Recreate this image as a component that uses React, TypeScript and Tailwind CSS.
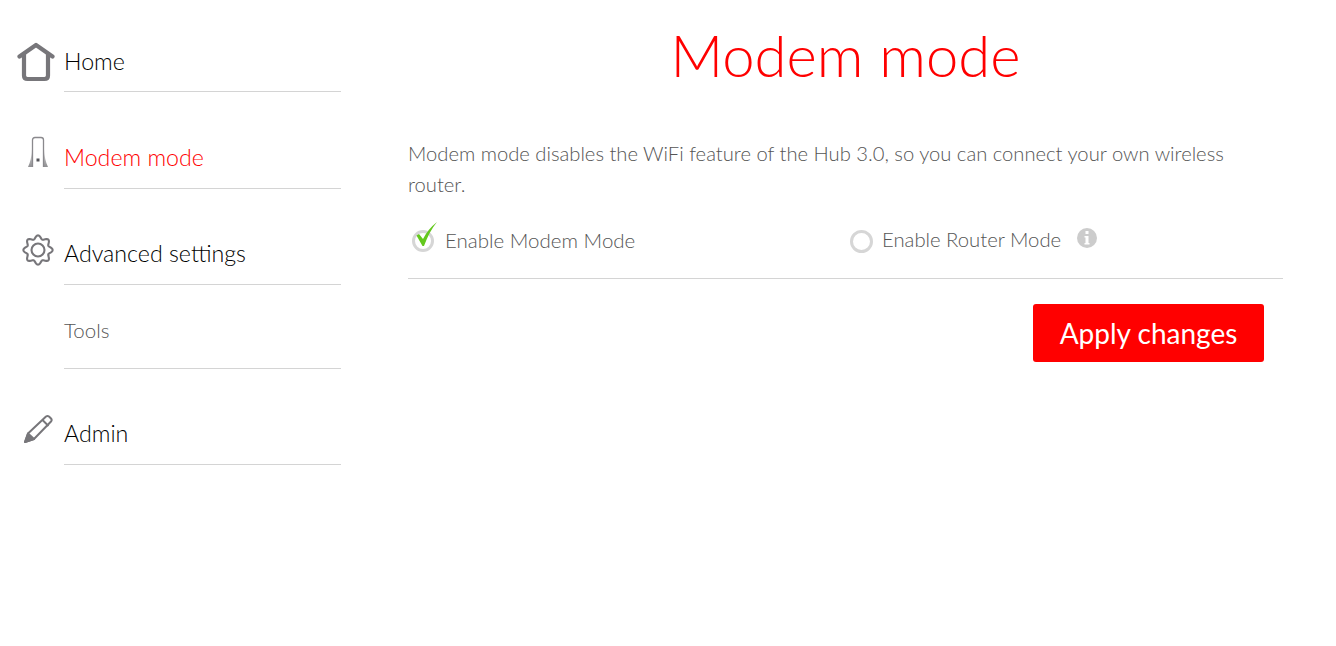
const gearPath = (() => {
  const pts: string[] = [];
  for (let i = 0; i < 240; i++) {
    const t = (i / 240) * Math.PI * 2;
    const r = 12.9 + 1.7 * Math.cos(8 * t);
    pts.push(`${(16 + r * Math.sin(t)).toFixed(2)} ${(16 - r * Math.cos(t)).toFixed(2)}`);
  }
  return `M${pts.join(" L")} Z`;
})();

export default function App() {
  const line = "border-b border-[#d4d4d4]";
  return (
    <div className="flex h-[646px] w-[1336px] overflow-hidden bg-white font-['Lato',sans-serif] font-light">
      <nav className="ml-[17px] mt-[42px] w-[324px] shrink-0">
        <div className="flex">
          <div className="w-[47px] shrink-0">
            <svg width="38" height="40" viewBox="0 0 38 40" fill="none" stroke="#77767a" strokeWidth="4.2" strokeLinejoin="round" strokeLinecap="round">
              <path d="M2.5 14.5 L19 3 L35.5 14.5" />
              <path d="M7 12 V33.5 Q7 37 10.5 37 H27.5 Q31 37 31 33.5 V12" />
            </svg>
          </div>
          <div className={`${line} h-[50px] flex-1 pt-[6px] text-[23.2px] leading-[26px] text-black`}>Home</div>
        </div>
        <div className="mt-[42px] flex">
          <div className="w-[47px] shrink-0 pl-[10px] pt-[2px]">
            <svg width="22" height="32" viewBox="0 0 22 32" fill="none">
              <defs>
                <linearGradient id="flare" x1="0" y1="0" x2="0" y2="1">
                  <stop offset="0" stopColor="#e0e0e0" />
                  <stop offset="1" stopColor="#8f8f92" />
                </linearGradient>
              </defs>
              <path d="M5 13 Q4.5 24 1 31 H5 Z M17 13 Q17.5 24 21 31 H17 Z" fill="url(#flare)" />
              <path d="M5.5 31 V4 Q5.5 1.5 8 1.5 H14 Q16.5 1.5 16.5 4 V31" stroke="#8a898d" strokeWidth="1.3" />
              <rect x="9.5" y="22.5" width="3" height="3" fill="#55555a" />
            </svg>
          </div>
          <div className={`${line} h-[55px] flex-1 pt-[10px] text-[23.2px] leading-[26px] text-[#ff0000]`}>Modem mode</div>
        </div>
        <div className="mt-[45px] flex">
          <div className="w-[47px] shrink-0 pl-[5px]">
            <svg width="32" height="32" viewBox="0 0 32 32" fill="none" stroke="#77767a" strokeWidth="2.1" strokeLinejoin="round">
              <path d={gearPath} />
              <circle cx="16" cy="16" r="6.5" />
            </svg>
          </div>
          <div className={`${line} h-[51px] flex-1 pt-[6px] text-[23.2px] leading-[26px] text-black`}>Advanced settings</div>
        </div>
        <div className={`${line} ml-[47px] h-[84px] pt-[32px] text-[20.5px] leading-[26px] text-[#555]`}>Tools</div>
        <div className="mt-[45px] flex">
          <div className="w-[47px] shrink-0 pl-[6px]">
            <svg width="30" height="30" viewBox="0 0 30 30" fill="none" stroke="#77767a" strokeWidth="2" strokeLinejoin="round">
              <path d="M23 2.5 Q24.5 1.5 26 2.5 L28 4.5 Q29.3 6 28 7.5 L11 25 L2 28 L5 19.5 Z" />
              <path d="M19.5 6 L25.5 12" />
              <path d="M5 19.5 L11 25 L2 28 Z" fill="#77767a" />
            </svg>
          </div>
          <div className={`${line} h-[51px] flex-1 pt-[6px] text-[23.2px] leading-[26px] text-black`}>Admin</div>
        </div>
      </nav>
      <main className="ml-[67px] w-[875px] shrink-0">
        <h1 className="pt-[19px] text-center text-[58px] font-light leading-[72px] text-[#ff0000]">Modem mode</h1>
        <p className="mt-[47px] text-[20.2px] leading-[31px] text-[#555]">Modem mode disables the WiFi feature of the Hub 3.0, so you can connect your own wireless router.</p>
        <div className={`${line} mt-[13px] flex h-[66px] items-start`}>
          <label className="flex w-[441px] items-start">
            <span className="relative ml-[4px] mt-[17px] h-[22px] w-[22px] rounded-full border-[3px] border-[#d6d6d6]">
              <svg className="absolute left-[-1px] top-[-11px]" width="26" height="26" viewBox="0 0 26 26" fill="#64c81e">
                <path d="M2.5 13.5 L5 12 L9 17 Q14 7 23 0 Q15.5 9 10 24 H8.5 Z" />
              </svg>
            </span>
            <span className="ml-[11px] mt-[14px] text-[20.5px] leading-[26px] text-[#555]">Enable Modem Mode</span>
          </label>
          <label className="flex items-start">
            <span className="ml-[1px] mt-[17px] h-[23px] w-[23px] rounded-full border-[3px] border-[#d6d6d6]"></span>
            <span className="ml-[9px] mt-[13px] text-[20.3px] leading-[26px] text-[#555]">Enable Router Mode</span>
            <span className="ml-[16px] mt-[15px] flex h-[20px] w-[20px] items-center justify-center rounded-full bg-[#cccccc]">
              <svg width="6" height="14" viewBox="0 0 6 14" fill="white"><rect x="1.5" y="0" width="3" height="3" /><path d="M0.5 5 H4.5 V12 H5.5 V13.5 H0.5 V12 H1.5 V6.5 H0.5 Z" /></svg>
            </span>
          </label>
        </div>
        <div className="mt-[25px] flex justify-end pr-[19px]">
          <button className="h-[58px] w-[231px] rounded-[3px] bg-[#ff0000] text-center text-[28px] font-normal text-white">Apply changes</button>
        </div>
      </main>
    </div>
  );
}
